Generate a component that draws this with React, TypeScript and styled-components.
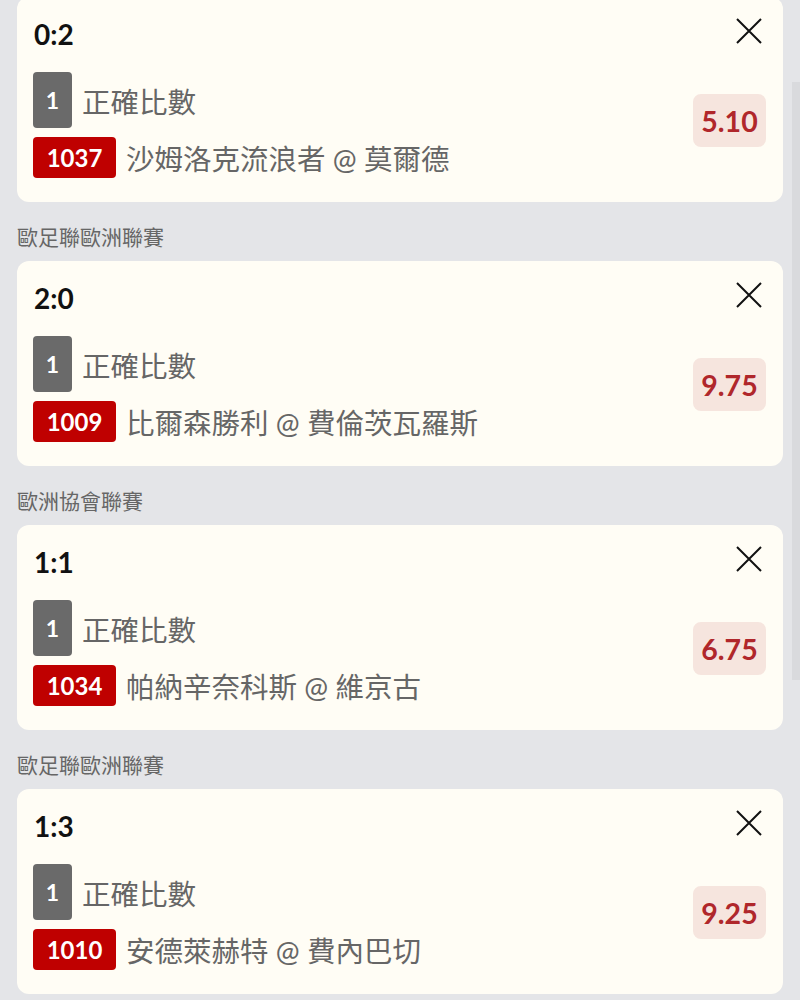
import styled, { createGlobalStyle } from "styled-components";

interface Bet {
  league?: string;
  score: string;
  market: string;
  leg: string;
  code: string;
  match: string;
  odds: string;
}

const bets: Bet[] = [
  {
    score: "0:2",
    market: "正確比數",
    leg: "1",
    code: "1037",
    match: "沙姆洛克流浪者 @ 莫爾德",
    odds: "5.10",
  },
  {
    league: "歐足聯歐洲聯賽",
    score: "2:0",
    market: "正確比數",
    leg: "1",
    code: "1009",
    match: "比爾森勝利 @ 費倫茨瓦羅斯",
    odds: "9.75",
  },
  {
    league: "歐洲協會聯賽",
    score: "1:1",
    market: "正確比數",
    leg: "1",
    code: "1034",
    match: "帕納辛奈科斯 @ 維京古",
    odds: "6.75",
  },
  {
    league: "歐足聯歐洲聯賽",
    score: "1:3",
    market: "正確比數",
    leg: "1",
    code: "1010",
    match: "安德萊赫特 @ 費內巴切",
    odds: "9.25",
  },
];

const GlobalStyle = createGlobalStyle`
  html, body {
    margin: 0;
    padding: 0;
    background: #e4e5e8;
    overflow: hidden;
  }
  body {
    font-family: Lato, "Noto Sans CJK TC", sans-serif;
  }
`;

const BetSlip = () => {
  return (
    <>
      <GlobalStyle />
      <Page>
        {bets.map((bet, i) => (
          <Group key={i}>
            {bet.league && <League>{bet.league}</League>}
            <Card>
              <CardHeader>
                <Score>{bet.score}</Score>
                <CloseButton aria-label="remove">
                  <svg width="26" height="26" viewBox="0 0 26 26">
                    <path
                      d="M1 1 L25 25 M25 1 L1 25"
                      stroke="#111"
                      strokeWidth="2"
                      fill="none"
                    />
                  </svg>
                </CloseButton>
              </CardHeader>
              <CardBody>
                <Lines>
                  <Line>
                    <LegBadge>{bet.leg}</LegBadge>
                    <LineText>{bet.market}</LineText>
                  </Line>
                  <Line>
                    <CodeBadge>{bet.code}</CodeBadge>
                    <LineText>{bet.match}</LineText>
                  </Line>
                </Lines>
                <Odds>{bet.odds}</Odds>
              </CardBody>
            </Card>
          </Group>
        ))}
      </Page>
      <ScrollThumb />
    </>
  );
};

const Page = styled.div`
  display: flex;
  flex-direction: column;
  padding: 0 17px;
  margin-top: -3px;
`;

const Group = styled.section`
  display: flex;
  flex-direction: column;
`;

const League = styled.div`
  font-size: 21px;
  line-height: 24px;
  color: #666;
  padding: 23px 0 12px;
`;

const Card = styled.div`
  background: #fffdf5;
  border-radius: 12px;
  padding: 20px 17px 24px 16px;
  display: flex;
  flex-direction: column;
  gap: 21px;
`;

const CardHeader = styled.div`
  display: flex;
  justify-content: space-between;
  align-items: center;
  height: 34px;
`;

const Score = styled.div`
  font-size: 28px;
  font-weight: 700;
  color: #111;
  line-height: 34px;
  padding-left: 1px;
`;

const CloseButton = styled.button`
  background: none;
  border: none;
  padding: 0;
  margin: 0 4px 7px 0;
  width: 26px;
  height: 26px;
  display: flex;
  cursor: pointer;
`;

const CardBody = styled.div`
  display: flex;
  justify-content: space-between;
  align-items: center;
`;

const Lines = styled.div`
  display: flex;
  flex-direction: column;
  gap: 9px;
`;

const Line = styled.div`
  display: flex;
  align-items: center;
  gap: 10px;
`;

const LineText = styled.span`
  font-size: 28.5px;
  color: #666;
  white-space: nowrap;
`;

const LegBadge = styled.span`
  width: 39px;
  height: 56px;
  border-radius: 4px;
  background: #6a6a6a;
  color: #fff;
  font-size: 23px;
  font-weight: 700;
  display: flex;
  align-items: center;
  justify-content: center;
`;

const CodeBadge = styled.span`
  height: 41px;
  width: 83px;
  border-radius: 4px;
  background: #bf0000;
  color: #fff;
  font-size: 24px;
  font-weight: 700;
  display: flex;
  align-items: center;
  justify-content: center;
`;

const Odds = styled.div`
  width: 73px;
  height: 53px;
  border-radius: 8px;
  background: #f6e5de;
  color: #b0272b;
  font-size: 28.5px;
  font-weight: 700;
  display: flex;
  align-items: center;
  justify-content: center;
  margin-bottom: 9px;
`;

const ScrollThumb = styled.div`
  position: fixed;
  right: 0;
  top: 82px;
  width: 8px;
  height: 598px;
  background: #d9dadd;
`;

export default BetSlip;
